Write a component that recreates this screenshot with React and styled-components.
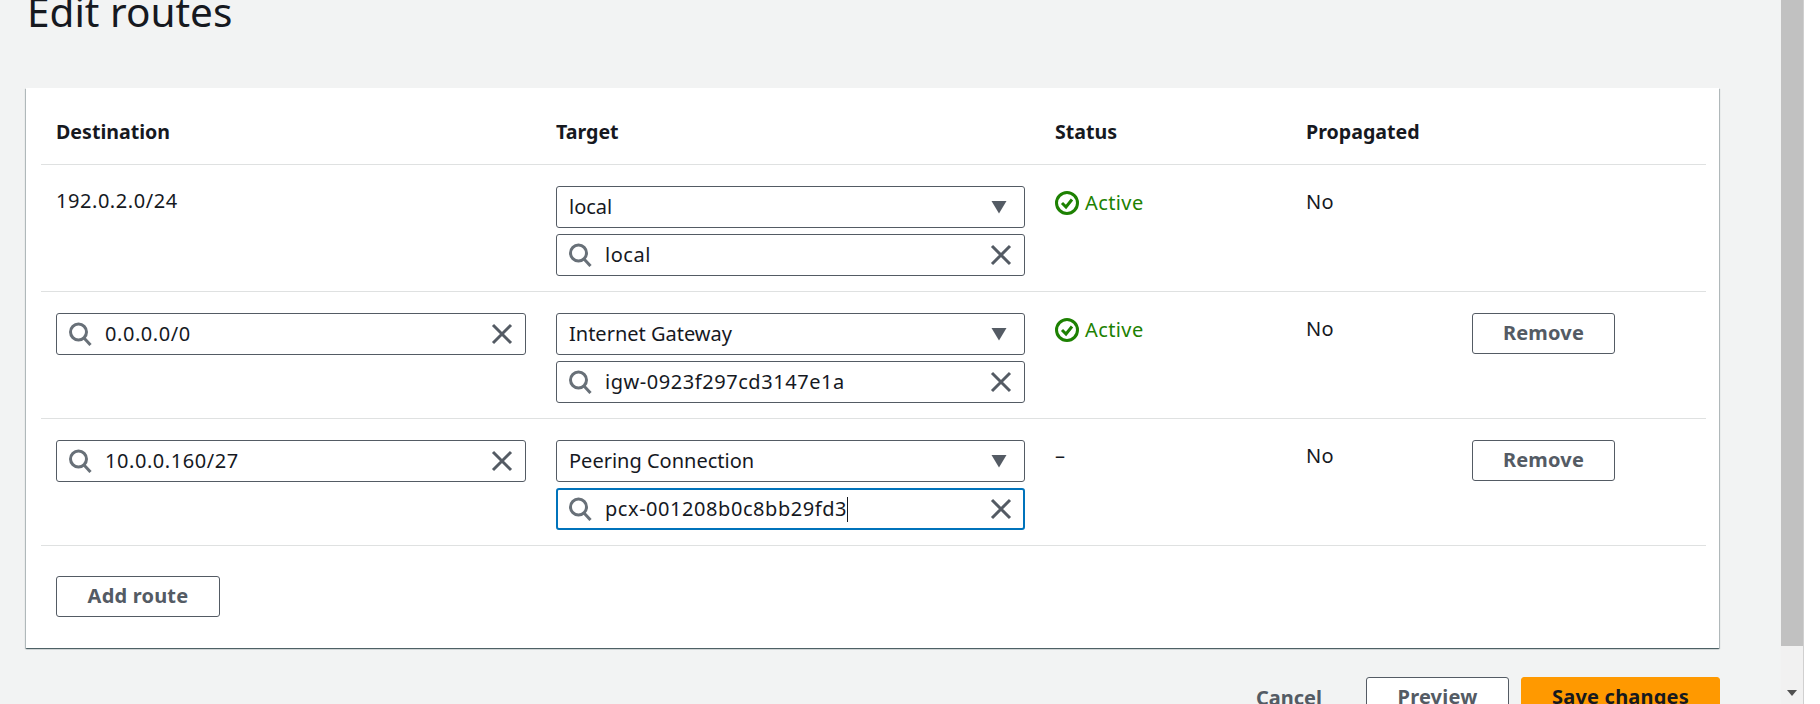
import React from "react";
import styled, { createGlobalStyle } from "styled-components";

const GlobalStyle = createGlobalStyle`
  html, body {
    margin: 0;
    height: 704px;
    overflow: hidden;
    background: #fff;
  }
  * { box-sizing: border-box; }
`;

const Page = styled.div`
  display: flex;
  height: 704px;
  overflow: hidden;
  font-family: "Noto Sans", sans-serif;
  color: #16191f;
`;

const Main = styled.main`
  width: 1781px;
  flex: none;
  background: #f2f3f3;
  padding-left: 26px;
`;

const Title = styled.h1`
  margin: -14px 0 51px 1px;
  height: 51px;
  font-size: 40.5px;
  line-height: 51px;
  font-weight: 400;
`;

const Card = styled.section`
  width: 1693px;
  height: 560px;
  background: #fff;
  padding: 0 13px 0 15px;
  box-shadow: 0 1px 1px 0 rgba(0, 28, 36, 0.5), 1px 1px 1px 0 rgba(0, 28, 36, 0.2), -1px 1px 1px 0 rgba(0, 28, 36, 0.2);
`;

const Row = styled.div`
  display: grid;
  grid-template-columns: 500px 499px 251px 166px 1fr;
  height: ${(props) => props.$height}px;
  padding: ${(props) => props.$top}px 0 0 15px;
  border-bottom: 1px solid #dfe1e1;
`;

const HeadCell = styled.div`
  font-size: 19.6px;
  font-weight: 700;
  line-height: 24px;
`;

const Cell = styled.div`
  font-size: 20px;
  line-height: 24px;
  letter-spacing: ${(props) => (props.$digits ? "0.55px" : "0.2px")};
  padding-top: ${(props) => props.$top || 0}px;
`;

const TargetStack = styled.div`
  display: flex;
  flex-direction: column;
  gap: 6px;
  width: 469px;
`;

const Field = styled.div`
  display: flex;
  align-items: center;
  align-self: start;
  height: 42px;
  width: ${(props) => props.$width || "100%"};
  padding: 0 12px 0 11px;
  background: #fff;
  border: 1px solid #545b64;
  border-radius: 3px;
  font-size: 20px;
  color: #16191f;

  ${(props) => props.$focused && "border: 2px solid #0073bb; padding: 0 11px 0 10px;"}
`;

const FieldText = styled.span`
  flex: 1;
  white-space: nowrap;
  padding-bottom: 2px;
  margin-left: ${(props) => (props.$search ? "13px" : "1px")};
  letter-spacing: ${(props) => (props.$search ? "0.55px" : "0")};
`;

const Caret = styled.span`
  display: inline-block;
  width: 1px;
  height: 25px;
  background: #16191f;
  vertical-align: -6px;
`;

const Status = styled.div`
  display: flex;
  align-items: center;
  align-self: start;
  gap: 6px;
  color: #1d8102;
  font-size: 20px;
  line-height: 24px;
  letter-spacing: 0.4px;
  padding-top: 4px;
`;

const Button = styled.button`
  display: flex;
  align-items: center;
  justify-content: center;
  height: 41px;
  width: ${(props) => props.$width}px;
  padding: 0 0 2px;
  background: ${(props) => (props.$primary ? "#ff9900" : "#fff")};
  border: 1px solid ${(props) => (props.$primary ? "#ff9900" : "#545b64")};
  border-radius: 3px;
  font-family: inherit;
  font-size: 20px;
  font-weight: 700;
  letter-spacing: 0.2px;
  color: ${(props) => (props.$primary ? "#16191f" : "#545b64")};
  flex: none;
`;

const AddRow = styled.div`
  padding: 30px 0 0 15px;
`;

const Footer = styled.div`
  display: flex;
  align-items: center;
  width: 1694px;
  height: 41px;
  margin-top: 29px;
  justify-content: flex-end;
  gap: 12px;
`;

const Cancel = styled.span`
  font-size: 20px;
  font-weight: 700;
  color: #545b64;
  margin-right: 32px;
`;

const ScrollTrack = styled.div`
  position: relative;
  flex: none;
  width: 22px;
  height: 704px;
  background: #f1f1f1;
`;

const ScrollThumb = styled.div`
  height: 646px;
  background: #c1c1c1;
`;

const ScrollArrow = styled.span`
  position: absolute;
  left: 6px;
  top: 690px;
  border-left: 5px solid transparent;
  border-right: 5px solid transparent;
  border-top: 6px solid #505050;
`;

const Gutter = styled.div`
  flex: 1;
  border-left: 1px solid #d0d0d0;
  background: #fff;
`;

const SearchIcon = () => (
  <svg width="24" height="24" viewBox="0 0 24 24" fill="none" stroke="#687078" strokeWidth="3" style={{ flex: "none" }}>
    <circle cx="10.5" cy="10" r="8" />
    <path d="M16 16L22.5 23" />
  </svg>
);

const ClearIcon = () => (
  <svg width="22" height="22" viewBox="0 0 22 22" fill="none" stroke="#545b64" strokeWidth="3" style={{ flex: "none" }}>
    <path d="M2 2L20 20M20 2L2 20" />
  </svg>
);

const DownIcon = () => (
  <svg width="16" height="14" viewBox="0 0 16 14" style={{ flex: "none", marginRight: 5 }}>
    <path d="M0.5 1H15.5L8 13.5Z" fill="#545b64" />
  </svg>
);

const ActiveIcon = () => (
  <svg width="24" height="26" viewBox="0 0 24 26" fill="none" stroke="#1d8102" strokeWidth="3" style={{ flex: "none" }}>
    <circle cx="12" cy="13" r="10.5" />
    <path d="M7 13L11 17L17 9.5" />
  </svg>
);

const SelectField = ({ value }) => (
  <Field>
    <FieldText>{value}</FieldText>
    <DownIcon />
  </Field>
);

const SearchField = ({ value, width, focused }) => (
  <Field $width={width} $focused={focused}>
    <SearchIcon />
    <FieldText $search>
      {value}
      {focused && <Caret />}
    </FieldText>
    <ClearIcon />
  </Field>
);

const routes = [
  { cidr: "0.0.0.0/0", type: "Internet Gateway", target: "igw-0923f297cd3147e1a", active: true },
  { cidr: "10.0.0.160/27", type: "Peering Connection", target: "pcx-001208b0c8bb29fd3", focused: true },
];

const App = () => (
  <Page>
    <GlobalStyle />
    <Main>
      <Title>Edit routes</Title>
      <Card>
        <Row $height={77} $top={32}>
          <HeadCell>Destination</HeadCell>
          <HeadCell>Target</HeadCell>
          <HeadCell>Status</HeadCell>
          <HeadCell>Propagated</HeadCell>
        </Row>
        <Row $height={127} $top={21}>
          <Cell $top={3} $digits>
            192.0.2.0/24
          </Cell>
          <TargetStack>
            <SelectField value="local" />
            <SearchField value="local" />
          </TargetStack>
          <Status>
            <ActiveIcon />
            Active
          </Status>
          <Cell $top={4}>No</Cell>
          <div />
        </Row>
        {routes.map((route) => (
          <Row key={route.cidr} $height={127} $top={21}>
            <SearchField value={route.cidr} width="470px" />
            <TargetStack>
              <SelectField value={route.type} />
              <SearchField value={route.target} focused={route.focused} />
            </TargetStack>
            {route.active ? (
              <Status>
                <ActiveIcon />
                Active
              </Status>
            ) : (
              <Cell $top={4}>–</Cell>
            )}
            <Cell $top={4}>No</Cell>
            <Button $width={143}>Remove</Button>
          </Row>
        ))}
        <AddRow>
          <Button $width={164}>Add route</Button>
        </AddRow>
      </Card>
      <Footer>
        <Cancel>Cancel</Cancel>
        <Button $width={143}>Preview</Button>
        <Button $width={199} $primary>
          Save changes
        </Button>
      </Footer>
    </Main>
    <ScrollTrack>
      <ScrollThumb />
      <ScrollArrow />
    </ScrollTrack>
    <Gutter />
  </Page>
);

export default App;
